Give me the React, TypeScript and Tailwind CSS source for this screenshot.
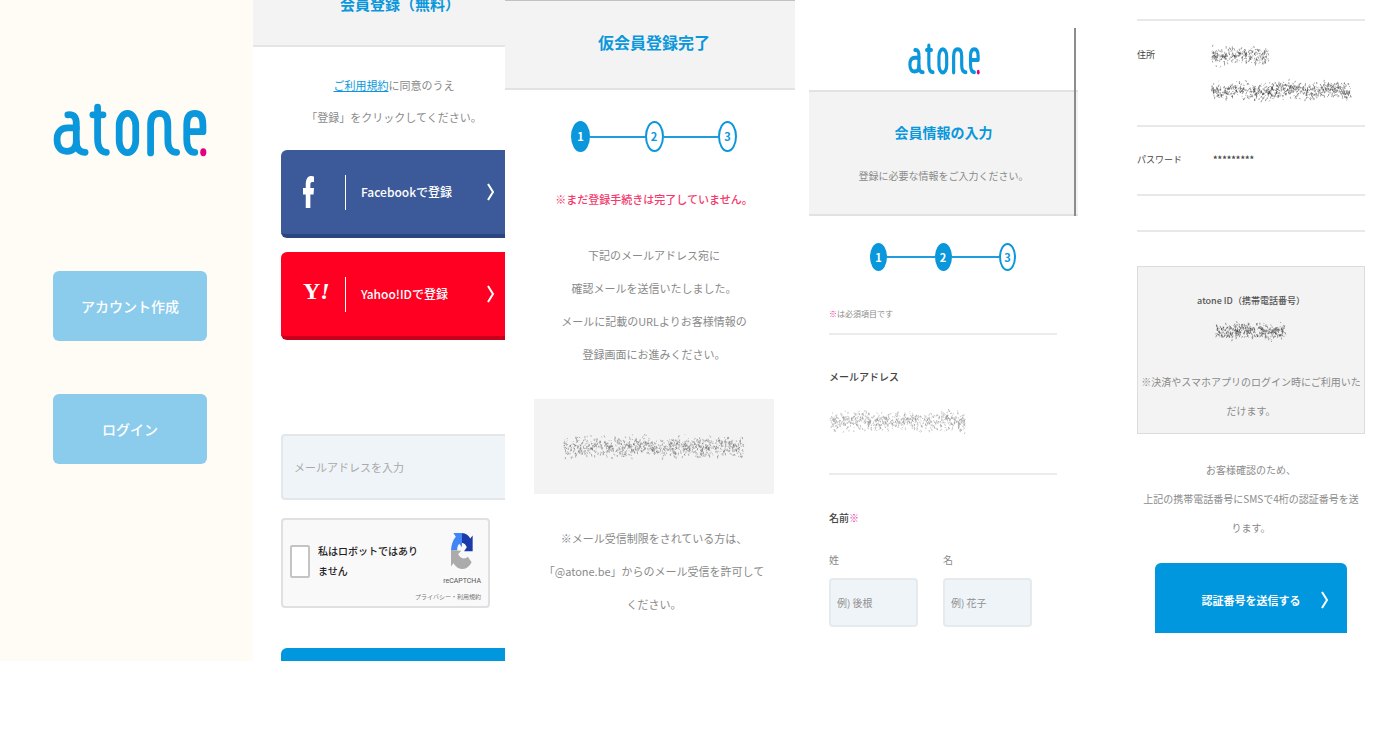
import type { ReactNode } from 'react';

function AtoneLogo({ className }: { className: string }) {
  return (
    <svg viewBox="162 130 456 160" className={className} preserveAspectRatio="none" role="img" aria-label="atone">
      <g fill="none" stroke="#0a97db" strokeWidth="20" strokeLinecap="round" strokeLinejoin="round">
        <path d="M206 165 C226 163 232 175 231 195 V245 C231 268 243 276 257 276" />
        <path d="M231 204 H206 C184 204 174 218 174 238 C174 260 185 273 203 273 C222 273 231 262 231 245" />
        <path d="M294 142 V235 C294 262 304 276 320 276 M280 165 H310" />
        <rect x="358" y="161" width="49" height="116" rx="25" ry="36" />
        <path d="M451 278 V196 C451 172 460 161 477 161 C494 161 502 172 502 196 V240 C502 265 513 276 528 276" />
        <path d="M558 215 H606 V195 C606 172 598 161 582 161 C565 161 558 173 558 195 V235 C558 262 566 276 582 276" />
      </g>
      <ellipse cx="607" cy="276" rx="9" ry="12" fill="#e4007f" />
    </svg>
  );
}

function Chevron() {
  return (
    <svg viewBox="0 0 8 18" className="h-[18px] w-2 shrink-0" fill="none" stroke="#fff" strokeWidth="2" aria-hidden="true">
      <path d="M1 1 L6 9 L1 17" />
    </svg>
  );
}

function FacebookIcon() {
  return (
    <svg viewBox="0 0 10 32" className="h-8 w-[11px]" preserveAspectRatio="none" aria-hidden="true">
      <path
        fill="#fff"
        d="M2.5 32 V18.5 H0 V12 H2.5 V8.5 C2.5 2.5 4.6 0 7.5 0 C8.5 0 9.4 0.2 10 0.5 V6 H8.4 C7 6 6.7 7.2 6.7 9 V12 H10 L9.6 18.5 H6.7 V32 Z"
      />
    </svg>
  );
}

function RecaptchaIcon() {
  return (
    <svg viewBox="596 338 64 106" className="h-9 w-[22px]" preserveAspectRatio="none" aria-hidden="true">
      <path fill="#1c3aa9" d="M627 338 C640 339 648 346 652 354 L659 345 V392 H634 L642 380 C639 372 634 368 627 367 Z" />
      <path fill="#4285f4" d="M628 338 H603 L610 349 C601 359 597 372 596 389 H614 C614 380 616 374 620 370 L628 380 Z" />
      <path fill="#ababab" d="M596 388 V437 L603 427 C610 439 620 444 630 444 C642 443 650 436 656 424 L645 408 C636 417 621 413 617 400 L626 390 Z" />
    </svg>
  );
}

// Speckled strokes drawn over personal data
function Redacted({ width, height, seed, color }: { width: number; height: number; seed: number; color: string }) {
  let state = seed;
  const random = () => {
    state = (state * 16807) % 2147483647;
    return state / 2147483647;
  };
  let d = '';
  for (let i = 0; i < width * 5; i += 1) {
    const x = random() * (width - 3) + 1;
    const spread = (random() + random() + random()) / 3;
    const y = spread * (height - 3) + 1 + Math.sin(x / 7);
    const dx = random() * 2 - 1;
    const dy = random() * 2 + 0.5;
    d += `M${x.toFixed(1)} ${y.toFixed(1)}l${dx.toFixed(1)} ${dy.toFixed(1)}`;
  }
  return (
    <svg width={width} height={height} viewBox={`0 0 ${width} ${height}`} className="block max-w-full" aria-hidden="true">
      <path d={d} fill="none" stroke={color} strokeWidth="0.5" />
    </svg>
  );
}

function Steps({ current, small }: { current: number; small?: boolean }) {
  const size = small ? 'h-7 w-[17px]' : 'h-[31px] w-[19px]';
  return (
    <ol className="flex items-center">
      {[1, 2, 3].map((step) => (
        <li key={step} className={step > 1 ? 'flex flex-1 items-center' : 'flex items-center'}>
          {step > 1 && <span className="h-[2px] flex-1 bg-[#1f9cdc]" />}
          <span
            className={`${size} flex items-center justify-center rounded-[50%] border-2 border-[#0a97db] text-[11px] font-bold ${
              step <= current ? 'bg-[#0a97db] text-white' : 'bg-white text-[#0a97db]'
            }`}
          >
            {step}
          </span>
        </li>
      ))}
    </ol>
  );
}

function SocialButton({ icon, label, className }: { icon: ReactNode; label: string; className: string }) {
  return (
    <button
      type="button"
      className={`flex h-[88px] w-full items-center rounded-l-md border-b-4 pr-[10px] pl-[22px] text-xs font-medium text-white ${className}`}
    >
      <span className="flex w-[42px] items-center">{icon}</span>
      <span className="mr-[15px] h-[35px] w-px bg-white" />
      <span className="mr-auto">{label}</span>
      <Chevron />
    </button>
  );
}

function StartScreen() {
  return (
    <section className="flex flex-col bg-[#fffcf6] pt-[103px] pr-[46px] pb-[197px] pl-[53px]">
      <AtoneLogo className="h-[54px] w-full" />
      <button type="button" className="mt-[114px] h-[70px] rounded-md bg-[#8bcbec] text-sm font-medium text-white">
        アカウント作成
      </button>
      <button type="button" className="mt-[53px] h-[70px] rounded-md bg-[#8bcbec] text-sm font-medium text-white">
        ログイン
      </button>
    </section>
  );
}

function RegisterScreen() {
  return (
    <section className="overflow-hidden">
      <header className="h-[47px] overflow-hidden border-b-2 border-[#e5e5e5] bg-[#f3f3f3] pl-[42px] text-center">
        <h1 className="-mt-2 text-[15px] leading-6 font-bold text-[#0a97db]">会員登録（無料）</h1>
      </header>
      <p className="mt-[22px] pl-[30px] text-center text-[11px] leading-8 text-[#8a8a8a]">
        <a href="#terms" className="text-[#0a97db] underline">
          ご利用規約
        </a>
        に同意のうえ
        <br />
        「登録」をクリックしてください。
      </p>
      <div className="mt-[17px] flex flex-col pl-7">
        <SocialButton icon={<FacebookIcon />} label="Facebookで登録" className="border-[#2a4580] bg-[#3c5a99]" />
        <SocialButton
          icon={<span className="pb-1.5 font-['Liberation_Serif',serif] text-2xl font-bold">Y<i>!</i></span>}
          label="Yahoo!IDで登録"
          className="mt-[14px] border-[#c8001c] bg-[#ff0023]"
        />
        <input
          type="email"
          aria-label="メールアドレス"
          placeholder="メールアドレスを入力"
          className="mt-[94px] h-[66px] w-full rounded-l border-2 border-r-0 border-[#e3e7e9] bg-[#eff4f8] pl-[11px] text-[11px] placeholder:text-[#a9a9a9]"
        />
        <div className="mt-[18px] mr-[15px] flex h-[90px] rounded-sm border-2 border-[#e0e0e0] bg-[#f9f9f9] px-[7px]">
          <label className="flex flex-1 items-center pb-1 text-[10px] leading-5 font-medium whitespace-nowrap text-[#222]">
            <input
              type="checkbox"
              className="mr-2 h-[33px] w-[20px] shrink-0 appearance-none rounded-xs border-2 border-[#c4c4c4] bg-white"
            />
            <span>
              私はロボットではあり
              <br />
              ません
            </span>
          </label>
          <div className="flex w-0 flex-col items-end pt-[13px] whitespace-nowrap">
            <div className="flex flex-col items-center">
              <RecaptchaIcon />
              <span className="mt-1 font-[Roboto,sans-serif] text-[7px] leading-4 text-[#555]">reCAPTCHA</span>
            </div>
            <span className="mt-0.5 text-[6px] leading-3 text-[#777]">
              <a href="#privacy">プライバシー</a>・<a href="#rules">利用規約</a>
            </span>
          </div>
        </div>
        <button type="submit" aria-label="登録" className="mt-10 h-[13px] rounded-tl-md bg-[#0097df]" />
      </div>
    </section>
  );
}

function ProvisionalScreen() {
  return (
    <section className="text-center text-[11px] leading-[33px] text-[#8a8a8a]">
      <header className="flex h-[90px] items-center justify-center border-t border-b-2 border-t-[#c4c1c4] border-b-[#e2e2e2] bg-[#f3f3f3] pb-1.5 pl-2">
        <h2 className="text-base font-bold text-[#0a97db]">仮会員登録完了</h2>
      </header>
      <div className="pr-[21px] pl-[29px]">
        <div className="mx-auto mt-[31px] w-[166px]">
          <Steps current={1} />
        </div>
        <p className="mt-[31px] font-medium text-[#f4396b]">※まだ登録手続きは完了していません。</p>
        <p className="mt-[23px]">
          下記のメールアドレス宛に
          <br />
          確認メールを送信いたしました。
          <br />
          メールに記載のURLよりお客様情報の
          <br />
          登録画面にお進みください。
        </p>
        <div className="mt-7 flex h-[95px] items-center justify-center bg-[#f3f3f3]">
          <Redacted width={182} height={30} seed={71} color="#666" />
        </div>
        <p className="mt-7">
          ※メール受信制限をされている方は、
          <br />
          「@atone.be」からのメール受信を許可して
          <br />
          ください。
        </p>
      </div>
    </section>
  );
}

function NameField({ id, label, placeholder }: { id: string; label: string; placeholder: string }) {
  return (
    <div className="flex flex-1 flex-col">
      <label htmlFor={id} className="leading-4">
        {label}
      </label>
      <input
        id={id}
        type="text"
        placeholder={placeholder}
        className="mt-[10px] h-[49px] w-full rounded-sm border-2 border-[#e5eaec] bg-[#eff4f8] pl-1.5 placeholder:text-[#8f8f8f]"
      />
    </div>
  );
}

function ProfileScreen() {
  return (
    <section className="relative pt-[43px] pl-[14px] text-[10px] leading-4 text-[#8a8a8a]">
      <AtoneLogo className="mx-auto h-8 w-[72px]" />
      <header className="mt-[15px] h-[126px] border-y-2 border-[#e2e2e2] bg-[#f3f3f3] pt-7 text-center">
        <h2 className="text-sm leading-6 font-bold text-[#0a97db]">会員情報の入力</h2>
        <p className="mt-6">登録に必要な情報をご入力ください。</p>
      </header>
      <span className="absolute top-7 right-[2px] h-[188px] w-[2px] bg-[#8c8c8c]" />
      <div className="pr-[21px] pl-5">
        <div className="mx-auto mt-[27px] w-[146px]">
          <Steps current={2} small />
        </div>
        <p className="mt-[35px] border-b-2 border-[#ececec] pb-[11px] text-[8px]">
          <span className="text-[#ec1fa0]">※</span>は必須項目です
        </p>
        <div className="border-b-2 border-[#ececec] pt-[34px] pb-[38px]">
          <h3 className="font-medium text-[#444]">メールアドレス</h3>
          <div className="mt-[22px]">
            <Redacted width={138} height={28} seed={417} color="#888" />
          </div>
        </div>
        <h3 className="mt-[35px] font-medium text-[#444]">
          名前<span className="text-[#ec1fa0]">※</span>
        </h3>
        <div className="mt-[26px] flex gap-[25px] pr-[25px]">
          <NameField id="family-name" label="姓" placeholder="例) 後根" />
          <NameField id="given-name" label="名" placeholder="例) 花子" />
        </div>
      </div>
    </section>
  );
}

function ConfirmScreen() {
  return (
    <section className="pt-[19px] pr-[15px] pl-[59px] text-[10px] text-[#8a8a8a]">
      <dl className="text-[9px] leading-4 text-[#444]">
        <div className="flex h-[106px] border-t-2 border-[#e8e8e8] pt-[21px]">
          <dt className="w-[74px] pt-[5px]">住所</dt>
          <dd className="flex flex-col gap-2">
            <Redacted width={60} height={27} seed={905} color="#444" />
            <Redacted width={142} height={27} seed={1337} color="#333" />
          </dd>
        </div>
        <div className="flex h-[71px] border-y-2 border-[#e8e8e8] pt-[25px]">
          <dt className="w-[76px]">パスワード</dt>
          <dd className="font-bold">*********</dd>
        </div>
      </dl>
      <div className="mt-[34px] border-t-2 border-[#e8e8e8]" />
      <div className="mt-[34px] h-[168px] border border-[#dcdcdc] bg-[#f3f3f3] text-center whitespace-nowrap">
        <h3 className="mt-[26px] text-[9px] leading-4 font-medium text-[#555]">atone ID（携帯電話番号）</h3>
        <div className="mt-[10px] flex justify-center">
          <Redacted width={72} height={24} seed={2024} color="#333" />
        </div>
        <p className="mt-6 leading-[29px]">
          ※決済やスマホアプリのログイン時にご利用いた
          <br />
          だけます。
        </p>
      </div>
      <p className="mt-[21px] text-center leading-[29px] whitespace-nowrap">
        お客様確認のため、
        <br />
        上記の携帯電話番号にSMSで4桁の認証番号を送
        <br />
        ります。
      </p>
      <div className="mt-[21px] px-[18px]">
        <button
          type="button"
          className="flex h-[70px] w-full items-center rounded-t-md bg-[#0097df] pt-1 pr-[18px] pl-[26px] text-[11px] font-bold text-white"
        >
          <span className="flex-1 text-center">認証番号を送信する</span>
          <Chevron />
        </button>
      </div>
    </section>
  );
}

function App() {
  return (
    <main
      lang="ja"
      className="grid min-h-screen grid-cols-[minmax(0,253fr)_minmax(0,252fr)_minmax(0,290fr)_minmax(0,283fr)_minmax(0,302fr)] items-start bg-white font-['Noto_Sans_CJK_JP',sans-serif]"
    >
      <StartScreen />
      <RegisterScreen />
      <ProvisionalScreen />
      <ProfileScreen />
      <ConfirmScreen />
    </main>
  );
}

export default App;
